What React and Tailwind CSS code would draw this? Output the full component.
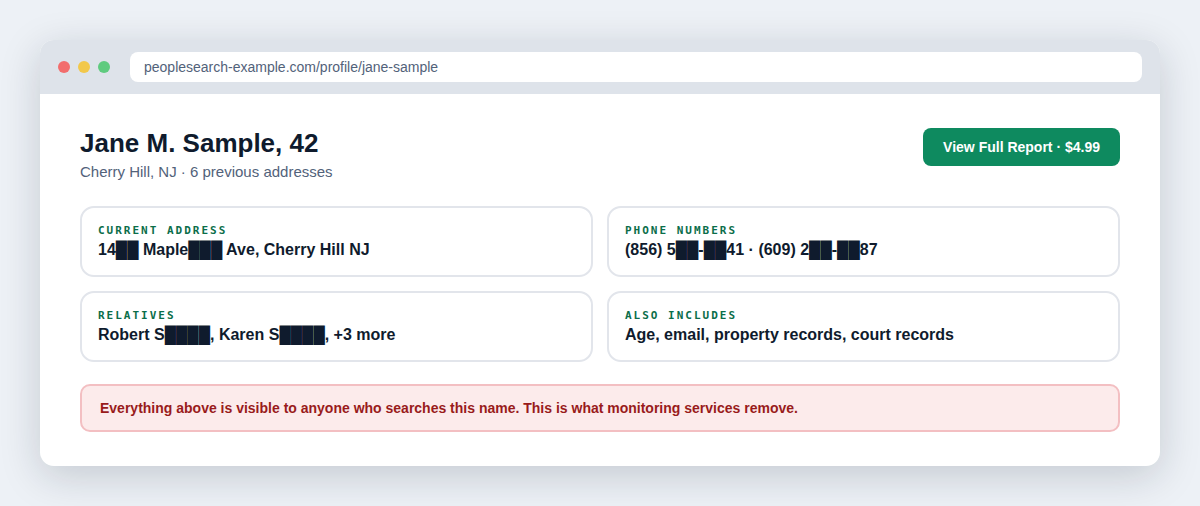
import React from "react";

const fields = [
  { label: "CURRENT ADDRESS", value: "14██ Maple███ Ave, Cherry Hill NJ" },
  { label: "PHONE NUMBERS", value: "(856) 5██-██41 · (609) 2██-██87" },
  { label: "RELATIVES", value: "Robert S████, Karen S████, +3 more" },
  { label: "ALSO INCLUDES", value: "Age, email, property records, court records" },
];

function BrowserBar({ url }) {
  return (
    <div className="flex h-[54px] items-center gap-2 bg-[#dee3ea] px-[18px]">
      <span className="size-3 rounded-full bg-[#f26d6d]" />
      <span className="size-3 rounded-full bg-[#f2c84b]" />
      <span className="size-3 rounded-full bg-[#5fcb7f]" />
      <div className="ml-3 flex h-[30px] flex-1 items-center rounded-lg bg-white px-3.5 text-sm text-[#52627a]">
        {url}
      </div>
    </div>
  );
}

export default function App() {
  return (
    <div className="h-[506px] bg-[#edf1f6] p-10 font-['Liberation_Sans',Arial,sans-serif] text-[#0f1b2d]">
      <div className="h-[426px] overflow-hidden rounded-[14px] bg-white shadow-[0_10px_40px_rgba(15,27,45,0.18)]">
        <BrowserBar url="peoplesearch-example.com/profile/jane-sample" />

        <div className="px-10 pt-[34px]">
          <div className="flex h-[56px] items-start justify-between">
            <div>
              <h1 className="text-[26px] leading-[30px] font-bold">Jane M. Sample, 42</h1>
              <p className="mt-[5px] text-[15px] leading-[17px] text-[#52627a]">Cherry Hill, NJ · 6 previous addresses</p>
            </div>
            <button className="h-[38px] rounded-lg bg-[#0e8a5f] px-5 text-sm font-bold text-white">
              View Full Report · $4.99
            </button>
          </div>

          <div className="mt-[22px] grid grid-cols-2 gap-3.5">
            {fields.map((f) => (
              <div key={f.label} className="h-[71px] rounded-[14px] border-2 border-[#e2e5eb] px-4 pt-4">
                <div className="font-['DejaVu_Sans_Mono',monospace] text-[11px] leading-[13px] font-bold tracking-[2px] text-[#0b6e4a]">
                  {f.label}
                </div>
                <div className="mt-1 text-base leading-[18px] font-bold">{f.value}</div>
              </div>
            ))}
          </div>

          <div className="mt-[22px] flex h-12 items-center rounded-[10px] border-2 border-[#f3bfc2] bg-[#fcebeb] px-[18px] text-sm font-bold text-[#991b1b]">
            Everything above is visible to anyone who searches this name. This is what monitoring services remove.
          </div>
        </div>
      </div>
    </div>
  );
}
